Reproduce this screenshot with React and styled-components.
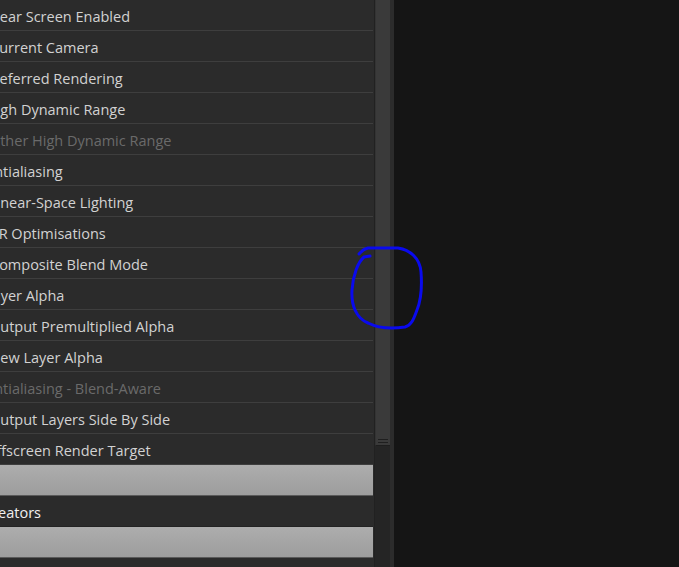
import React from 'react';
import styled, { createGlobalStyle } from 'styled-components';

const GlobalStyle = createGlobalStyle`
  html, body {
    margin: 0;
    padding: 0;
    background: #151515;
    overflow: hidden;
  }
  #root {
    height: 100vh;
  }
`;

const Window = styled.div`
  position: relative;
  display: flex;
  height: 567px;
  width: 679px;
  font-family: 'Open Sans', 'Noto Sans', sans-serif;
`;

const Panel = styled.div`
  width: 375px;
  height: 100%;
  background: #2b2b2b;
  border-right: 1px solid #212121;
  overflow: hidden;
  padding-right: 1px;
  box-sizing: border-box;
`;

const List = styled.div`
  display: flex;
  flex-direction: column;
`;

const Row = styled.div`
  height: 30px;
  border-bottom: 1px solid #3e3e3e;
  display: flex;
  align-items: center;
  padding-top: 2px;
  box-sizing: content-box;
  height: 28px;
  overflow: hidden;
  white-space: nowrap;
`;

const Label = styled.span`
  margin-left: ${(p) => p.$shift}px;
  font-size: 14.5px;
  color: ${(p) => (p.$disabled ? '#6a6a6a' : p.$bright ? '#f0f0f0' : '#d2d2d2')};
`;

const HeaderRow = styled(Row)`
  border-bottom: 1px solid #232323;
`;

const Bar = styled.div`
  height: 30px;
  background: linear-gradient(#adadad, #9d9d9d);
  border-bottom: 1px solid #5a5a5a;
`;

const Scroll = styled.div`
  width: 15px;
  height: 100%;
  background: #252525;
  display: flex;
  flex-direction: column;
`;

const Thumb = styled.div`
  height: 446px;
  background: #3a3a3a;
  border-left: 1px solid #333;
  border-bottom: 1px solid #1e1e1e;
  box-sizing: border-box;
  display: flex;
  flex-direction: column;
  justify-content: flex-end;
  gap: 2px;
  padding: 0 2px 2px;
`;

const Grip = styled.div`
  height: 1px;
  background: #1f1f1f;
`;

const Gutter = styled.div`
  width: 4px;
  height: 100%;
  background: #2c2c2c;
`;

const Viewport = styled.div`
  flex: 1;
  height: 100%;
  background: #151515;
`;

const Marker = styled.svg`
  position: absolute;
  left: 0;
  top: 0;
  pointer-events: none;
`;

const rows = [
  { text: 'Clear Screen Enabled', shift: -13 },
  { text: 'Current Camera', shift: -10 },
  { text: 'Deferred Rendering', shift: -11 },
  { text: 'High Dynamic Range', shift: -14 },
  { text: 'Dither High Dynamic Range', shift: -14, disabled: true },
  { text: 'Antialiasing', shift: -15 },
  { text: 'Linear-Space Lighting', shift: -11 },
  { text: 'VR Optimisations', shift: -10 },
  { text: 'Composite Blend Mode', shift: -10 },
  { text: 'Layer Alpha', shift: -15 },
  { text: 'Output Premultiplied Alpha', shift: -11 },
  { text: 'View Layer Alpha', shift: -12 },
  { text: 'Antialiasing - Blend-Aware', shift: -15, disabled: true },
  { text: 'Output Layers Side By Side', shift: -11 },
  { text: 'Offscreen Render Target', shift: -15 },
];

export default function App() {
  return (
    <>
      <GlobalStyle />
      <Window>
        <Panel>
          <List>
            {rows.map((r) => (
              <Row key={r.text}>
                <Label $shift={r.shift} $disabled={r.disabled}>
                  {r.text}
                </Label>
              </Row>
            ))}
            <Bar />
            <HeaderRow>
              <Label $shift={-17} $bright>
                Creators
              </Label>
            </HeaderRow>
            <Bar />
          </List>
        </Panel>
        <Scroll>
          <Thumb>
            <Grip />
            <Grip />
          </Thumb>
        </Scroll>
        <Gutter />
        <Viewport />
        <Marker width="679" height="567" viewBox="0 0 679 567">
          <path
            d="M370 256 L364 257 C358 262 353 275 352 290 C351 305 356 318 368 323 C378 328 392 329 405 327 C412 325 414 318 417 310 C421 300 422 285 421 272 C420 258 410 250 398 248 L368 248 C363 249 361 252 359 254"
            fill="none"
            stroke="#0a0aee"
            strokeWidth="3"
            strokeLinecap="round"
            strokeLinejoin="round"
          />
        </Marker>
      </Window>
    </>
  );
}
